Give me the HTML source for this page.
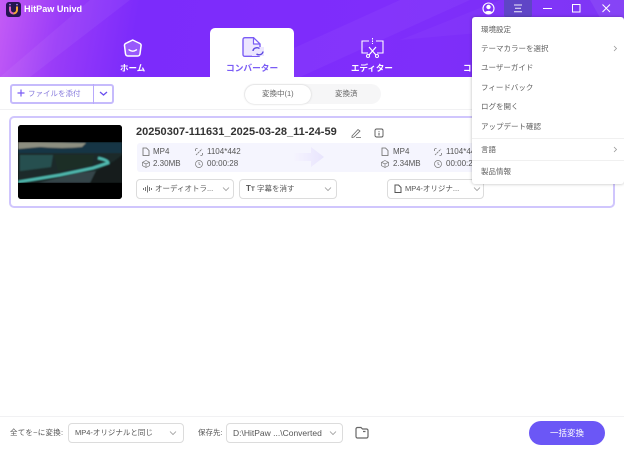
<!DOCTYPE html>
<html><head><meta charset="utf-8">
<style>
html,body{margin:0;padding:0}
body{width:624px;height:450px;position:relative;overflow:hidden;background:#fff;font-family:"Liberation Sans","Noto Sans CJK JP",sans-serif;color:#555}
.a{position:absolute;white-space:nowrap}
.hd{left:0;top:0;width:624px;height:77px;background:linear-gradient(100deg,#c45cf5 0%,#9a3cf8 10%,#7c2bfb 22%,#7f2dfb 60%,#7a30f5 100%);overflow:hidden}
.sel{border:1px solid #dcdcdc;border-radius:4px;background:#fff;box-sizing:border-box}
.t10{font-size:8px;line-height:12px;color:#555}
.j{font-size:7.5px;line-height:12px;color:#555}
.m{font-size:7.5px;line-height:12px;color:#5e5e5e;left:481px}
svg{position:absolute;overflow:visible}
</style></head><body>
<div class="a hd">
<svg style="left:0;top:0" width="624" height="77"><path d="M230 77L400 0H470L300 77Z" fill="#fff" opacity=".04"/><path d="M0 77L90 0H130L30 77Z" fill="#fff" opacity=".05"/><path d="M590 0L624 60V0Z" fill="#fff" opacity=".07"/><path d="M500 0L400 40L624 20V0Z" fill="#fff" opacity=".03"/></svg>
</div>
<!-- logo -->
<svg style="left:6px;top:2px" width="16" height="16"><rect x="0" y="0" width="15" height="15" rx="3" fill="#231550"/><path d="M4 4.500V8a3.500 3.500 0 0 0 3.500 3.500" fill="none" stroke="#e05cc0" stroke-width="2"/><path d="M11 4.500V8a3.500 3.500 0 0 1-3.500 3.500" fill="none" stroke="#f2a835" stroke-width="2"/><circle cx="4" cy="2.600" r=".8" fill="#b08cff"/><circle cx="11" cy="2.600" r=".8" fill="#b08cff"/></svg>
<div class="a" style="left:24px;top:3px;font-size:9.100px;line-height:13px;font-weight:bold;color:#fff">HitPaw Univd</div>
<!-- window controls -->
<svg style="left:482px;top:2px" width="14" height="14"><circle cx="6.500" cy="6.500" r="5.500" fill="none" stroke="#fff" stroke-width="1.100"/><circle cx="6.500" cy="5" r="2.200" fill="#fff"/><path d="M2.700 10.500a4.500 3.500 0 0 1 7.600 0a5.500 5.500 0 0 1-7.600 0Z" fill="#fff"/></svg>
<div class="a" style="left:504px;top:0;width:28px;height:17px;background:#5f45c6;border-radius:0 0 2px 2px"></div>
<svg style="left:514px;top:4px" width="10" height="9"><path d="M0 1h8M1 4.300h6M0 7.700h8" stroke="#fff" stroke-width="1" fill="none" opacity=".9"/></svg>
<svg style="left:543px;top:8px" width="10" height="2"><path d="M0 .5h9" stroke="#fff" stroke-width="1"/></svg>
<svg style="left:572px;top:4px" width="9" height="9"><rect x=".5" y=".5" width="7.500" height="7.500" fill="none" stroke="#fff" stroke-width="1"/></svg>
<svg style="left:602px;top:4px" width="9" height="9"><path d="M.5.5l7.500 7.500M8 .5l-7.500 7.500" stroke="#fff" stroke-width="1"/></svg>
<!-- tabs -->
<div class="a" style="left:210px;top:28px;width:84px;height:50px;background:#fff;border-radius:5px 5px 0 0"></div>
<svg style="left:124px;top:39px" width="19" height="19"><path d="M8.700 1L16 4.500Q17.300 5.200 17.100 6.500L16 14.800Q15.700 17 13.500 17H4Q1.800 17 1.500 14.800L.5 6.500Q.3 5.200 1.500 4.500Z" fill="#ffffff38" stroke="#fff" stroke-width="1.500" stroke-linejoin="round"/><path d="M5 10.800q3.800 2.700 7.500 0" fill="none" stroke="#fff" stroke-width="1.300" stroke-linecap="round"/></svg>
<div class="a" style="left:120px;top:62px;font-size:8.500px;line-height:13px;font-weight:bold;color:#fff">ホーム</div>
<svg style="left:242px;top:37px" width="22" height="20"><path d="M3 .7H11.500L18 7V17.500Q18 19.300 16 19.300H3Q1 19.300 1 17.500V2.700Q1 .7 3 .7Z" fill="#ece6ff" stroke="#7a5cf5" stroke-width="1.400"/><path d="M11.500 .7V7H18Z" fill="#fff" stroke="#7a5cf5" stroke-width="1.200" stroke-linejoin="round"/><rect x="10" y="10" width="12" height="9" fill="#ece6ff"/><path d="M11 14a4 3.500 0 0 1 6.500-2.500M21 14.500a4 3.500 0 0 1-6.500 2.500" fill="none" stroke="#5c49e0" stroke-width="1.400"/></svg>
<div class="a" style="left:226px;top:62px;font-size:8.700px;line-height:13px;font-weight:bold;color:#7a5cf5">コンバーター</div>
<svg style="left:360px;top:37px" width="26" height="22"><path d="M9 4H2v12h6M16 4h7v12h-6" fill="none" stroke="#fff" stroke-width="1.100"/><path d="M12.500 1v6" stroke="#fff" stroke-dasharray="1.500 1"/><path d="M9 10l7 8M16 10l-7 8" stroke="#fff" stroke-width="1.200"/><circle cx="8" cy="19" r="1.500" fill="none" stroke="#fff"/><circle cx="17" cy="19" r="1.500" fill="none" stroke="#fff"/></svg>
<div class="a" style="left:351px;top:62px;font-size:8.500px;line-height:13px;font-weight:bold;color:#fff">エディター</div>
<div class="a" style="left:463px;top:62px;font-size:8.500px;line-height:13px;font-weight:bold;color:#fff">コ</div>
<!-- toolbar -->
<div class="a" style="left:10px;top:84px;width:104px;height:20px;box-sizing:border-box;border:2px solid #c6bbfc;border-radius:3px;background:#fff"></div>
<div class="a" style="left:93px;top:84px;width:1px;height:20px;background:#b8a9fb"></div>
<svg style="left:17px;top:89px" width="9" height="9"><path d="M4 .5v7M.5 4h7" stroke="#7a5cf5" stroke-width="1.200"/></svg>
<div class="a j" style="left:28px;top:88px;color:#8578dc">ファイルを添付</div>
<svg style="left:99px;top:91px" width="10" height="6"><path d="M1 1l3.500 3L8 1" fill="none" stroke="#6a50ef" stroke-width="1.300"/></svg>
<div class="a" style="left:244px;top:84px;width:137px;height:20px;border-radius:10px;background:#f6f6f7"></div>
<div class="a" style="left:245px;top:84.500px;width:66px;height:19px;border-radius:10px;background:#fff;box-shadow:0 0 2px #ccc"></div>
<div class="a j" style="left:262px;top:88px;color:#666">変換中(1)</div>
<div class="a j" style="left:335px;top:88px;color:#666">変換済</div>
<div class="a" style="left:0;top:109px;width:624px;height:1px;background:#f1f1f3"></div>
<!-- card -->
<div class="a" style="left:9px;top:116px;width:606px;height:92px;box-sizing:border-box;border:2px solid #d0c6fd;border-radius:5px;background:#fff"></div>
<svg style="left:18px;top:125px" width="104" height="74"><defs><clipPath id="c"><rect width="104" height="74" rx="3"/></clipPath><filter id="b"><feGaussianBlur stdDeviation=".7"/></filter></defs><g clip-path="url(#c)"><rect width="104" height="74" fill="#000"/><g filter="url(#b)"><rect y="17" width="104" height="41" fill="#1a2c2b"/><rect y="17" width="104" height="11" fill="#123644"/><path d="M0 17H20L68 18L64 22Q45 24 22 22L0 24Z" fill="#8c8e80"/><path d="M2 30H35L33 42L2 46Z" fill="#27504f"/><path d="M36 30L76 30L74 40L40 46Z" fill="#1e2e28"/><path d="M20 58L60 48L78 46L72 58Z" fill="#35444a"/><path d="M78 46L96 36L104 30V58H72Z" fill="#121f1b"/><path d="M0 57L42 50L75 43L90 38Q90 35 80 33" fill="none" stroke="#4fb8ae" stroke-width="2.800"/></g><rect y="0" width="104" height="17" fill="#000"/><rect y="58" width="104" height="16" fill="#000"/></g></svg>
<div class="a" style="left:136px;top:125px;font-size:11px;line-height:14px;font-weight:bold;color:#333;letter-spacing:.02px">20250307-111631_2025-03-28_11-24-59</div>
<svg style="left:351px;top:128px" width="11" height="10"><path d="M1 8L7 1.500L9 3L3 9L1 9.500ZM5 9.500H10" fill="none" stroke="#666" stroke-width=".8"/></svg>
<svg style="left:374px;top:128px" width="11" height="11"><rect x="1" y="1" width="8" height="8" rx="1.500" fill="none" stroke="#555" stroke-width=".9"/><path d="M5 3v.8M5 4.700V7.500" stroke="#555" stroke-width="1"/></svg>
<div class="a" style="left:137px;top:143px;width:340px;height:29px;background:#f5f5fe;border-radius:3px"></div>
<svg style="left:294px;top:147px" width="32" height="22"><defs><linearGradient id="g"><stop offset="0" stop-color="#f5f4fe"/><stop offset="1" stop-color="#e8e4fd"/></linearGradient></defs><path d="M0 6H17V0L30 10L17 20V14H0Z" fill="url(#g)"/></svg>
<svg style="left:142px;top:147px" width="8" height="10"><path d="M1 1h3.500L7 3.500V8.500H1Z" fill="none" stroke="#666" stroke-width=".8"/></svg>
<div class="a t10" style="left:153px;top:145.500px">MP4</div>
<svg style="left:195px;top:148px" width="8" height="8"><path d="M.5 3V.5H3M7.500 5V7.500H5M1 7l6-6" fill="none" stroke="#777" stroke-width=".8" stroke-dasharray="2 .6"/></svg>
<div class="a t10" style="left:207px;top:145.500px">1104*442</div>
<svg style="left:142px;top:160px" width="8" height="8"><path d="M4 .5L7.500 2.300V5.700L4 7.500L.5 5.700V2.300ZM.5 2.300L4 4L7.500 2.300M4 4V7.500" fill="none" stroke="#777" stroke-width=".7"/></svg>
<div class="a t10" style="left:153px;top:158px">2.30MB</div>
<svg style="left:195px;top:160px" width="8" height="8"><circle cx="4" cy="4" r="3.500" fill="none" stroke="#777" stroke-width=".7"/><path d="M4 2v2.200l1.500 .8" fill="none" stroke="#777" stroke-width=".7"/></svg>
<div class="a t10" style="left:207px;top:158px">00:00:28</div>
<svg style="left:381px;top:147px" width="8" height="10"><path d="M1 1h3.500L7 3.500V8.500H1Z" fill="none" stroke="#666" stroke-width=".8"/></svg>
<div class="a t10" style="left:393px;top:145.500px">MP4</div>
<svg style="left:434px;top:148px" width="8" height="8"><path d="M.5 3V.5H3M7.500 5V7.500H5M1 7l6-6" fill="none" stroke="#777" stroke-width=".8" stroke-dasharray="2 .6"/></svg>
<div class="a t10" style="left:446px;top:145.500px">1104*442</div>
<svg style="left:381px;top:160px" width="8" height="8"><path d="M4 .5L7.500 2.300V5.700L4 7.500L.5 5.700V2.300ZM.5 2.300L4 4L7.500 2.300M4 4V7.500" fill="none" stroke="#777" stroke-width=".7"/></svg>
<div class="a t10" style="left:393px;top:158px">2.34MB</div>
<svg style="left:434px;top:160px" width="8" height="8"><circle cx="4" cy="4" r="3.500" fill="none" stroke="#777" stroke-width=".7"/><path d="M4 2v2.200l1.500 .8" fill="none" stroke="#777" stroke-width=".7"/></svg>
<div class="a t10" style="left:446px;top:158px">00:00:28</div>
<!-- dropdowns -->
<div class="a sel" style="left:136px;top:179px;width:98px;height:20px"></div>
<svg style="left:143px;top:185px" width="9" height="8"><path d="M.5 3v2M2.500 2v4M4.500 .5v7M6.500 2v4M8.500 3v2" stroke="#777" stroke-width="1"/></svg>
<div class="a j" style="left:155px;top:183px">オーディオトラ...</div>
<svg style="left:222px;top:187px" width="8" height="5"><path d="M1 .5l3 3 3-3" fill="none" stroke="#999" stroke-width=".8"/></svg>
<div class="a sel" style="left:239px;top:179px;width:98px;height:20px"></div>
<div class="a" style="left:246px;top:183px;font-size:8px;line-height:12px;color:#555;font-weight:bold">T<span style="font-size:6.500px">T</span></div>
<div class="a j" style="left:257px;top:183px">字幕を消す</div>
<svg style="left:324px;top:187px" width="8" height="5"><path d="M1 .5l3 3 3-3" fill="none" stroke="#999" stroke-width=".8"/></svg>
<div class="a sel" style="left:387px;top:179px;width:97px;height:20px"></div>
<svg style="left:394px;top:184px" width="8" height="10"><path d="M1 1h3.500L7 3.500V8.500H1Z" fill="none" stroke="#555" stroke-width="1"/></svg>
<div class="a j" style="left:405px;top:183px">MP4-オリジナ...</div>
<svg style="left:473px;top:187px" width="8" height="5"><path d="M1 .5l3 3 3-3" fill="none" stroke="#999" stroke-width=".8"/></svg>
<!-- menu -->
<div class="a" style="left:472px;top:17px;width:152px;height:167px;background:#fff;border-radius:3px;box-shadow:0 0 3px rgba(0,0,0,.28)"></div>
<div class="a m" style="top:24px">環境設定</div>
<div class="a m" style="top:43px">テーマカラーを選択</div>
<svg style="left:613px;top:45px" width="5" height="7"><path d="M1 1l2.500 2.500L1 6" fill="none" stroke="#999" stroke-width=".8"/></svg>
<div class="a m" style="top:62px">ユーザーガイド</div>
<div class="a m" style="top:82px">フィードバック</div>
<div class="a m" style="top:101px">ログを開く</div>
<div class="a m" style="top:121px">アップデート確認</div>
<div class="a" style="left:472px;top:138px;width:152px;height:1px;background:#f0f0f0"></div>
<div class="a m" style="top:144px">言語</div>
<svg style="left:613px;top:146px" width="5" height="7"><path d="M1 1l2.500 2.500L1 6" fill="none" stroke="#999" stroke-width=".8"/></svg>
<div class="a" style="left:472px;top:160px;width:152px;height:1px;background:#f0f0f0"></div>
<div class="a m" style="top:166px">製品情報</div>
<!-- footer -->
<div class="a" style="left:0;top:416px;width:624px;height:1px;background:#f1f1f3"></div>
<div class="a j" style="left:10px;top:427px;letter-spacing:.25px">全てを~に変換:</div>
<div class="a sel" style="left:68px;top:423px;width:116px;height:20px"></div>
<div class="a j" style="left:75px;top:427px">MP4-オリジナルと同じ</div>
<svg style="left:169px;top:431px" width="8" height="5"><path d="M1 .5l3 3 3-3" fill="none" stroke="#999" stroke-width=".8"/></svg>
<div class="a j" style="left:198px;top:427px">保存先:</div>
<div class="a sel" style="left:226px;top:423px;width:117px;height:20px"></div>
<div class="a" style="left:233px;top:427px;font-size:8.500px;line-height:12px;color:#555">D:\HitPaw ...\Converted</div>
<svg style="left:329px;top:431px" width="8" height="5"><path d="M1 .5l3 3 3-3" fill="none" stroke="#999" stroke-width=".8"/></svg>
<svg style="left:355px;top:426px" width="15" height="14"><path d="M1 3a1.500 1.500 0 0 1 1.500-1.500H6L7.500 3H11.500A1.500 1.500 0 0 1 13 4.500V10.500A1.500 1.500 0 0 1 11.500 12H2.500A1.500 1.500 0 0 1 1 10.500ZM8 5.500h2.500" fill="none" stroke="#666" stroke-width="1.200"/></svg>
<div class="a" style="left:529px;top:421px;width:76px;height:24px;border-radius:12px;background:#6b57f6;color:#fff;font-size:8.500px;line-height:24px;text-align:center">一括変換</div>
</body></html>
